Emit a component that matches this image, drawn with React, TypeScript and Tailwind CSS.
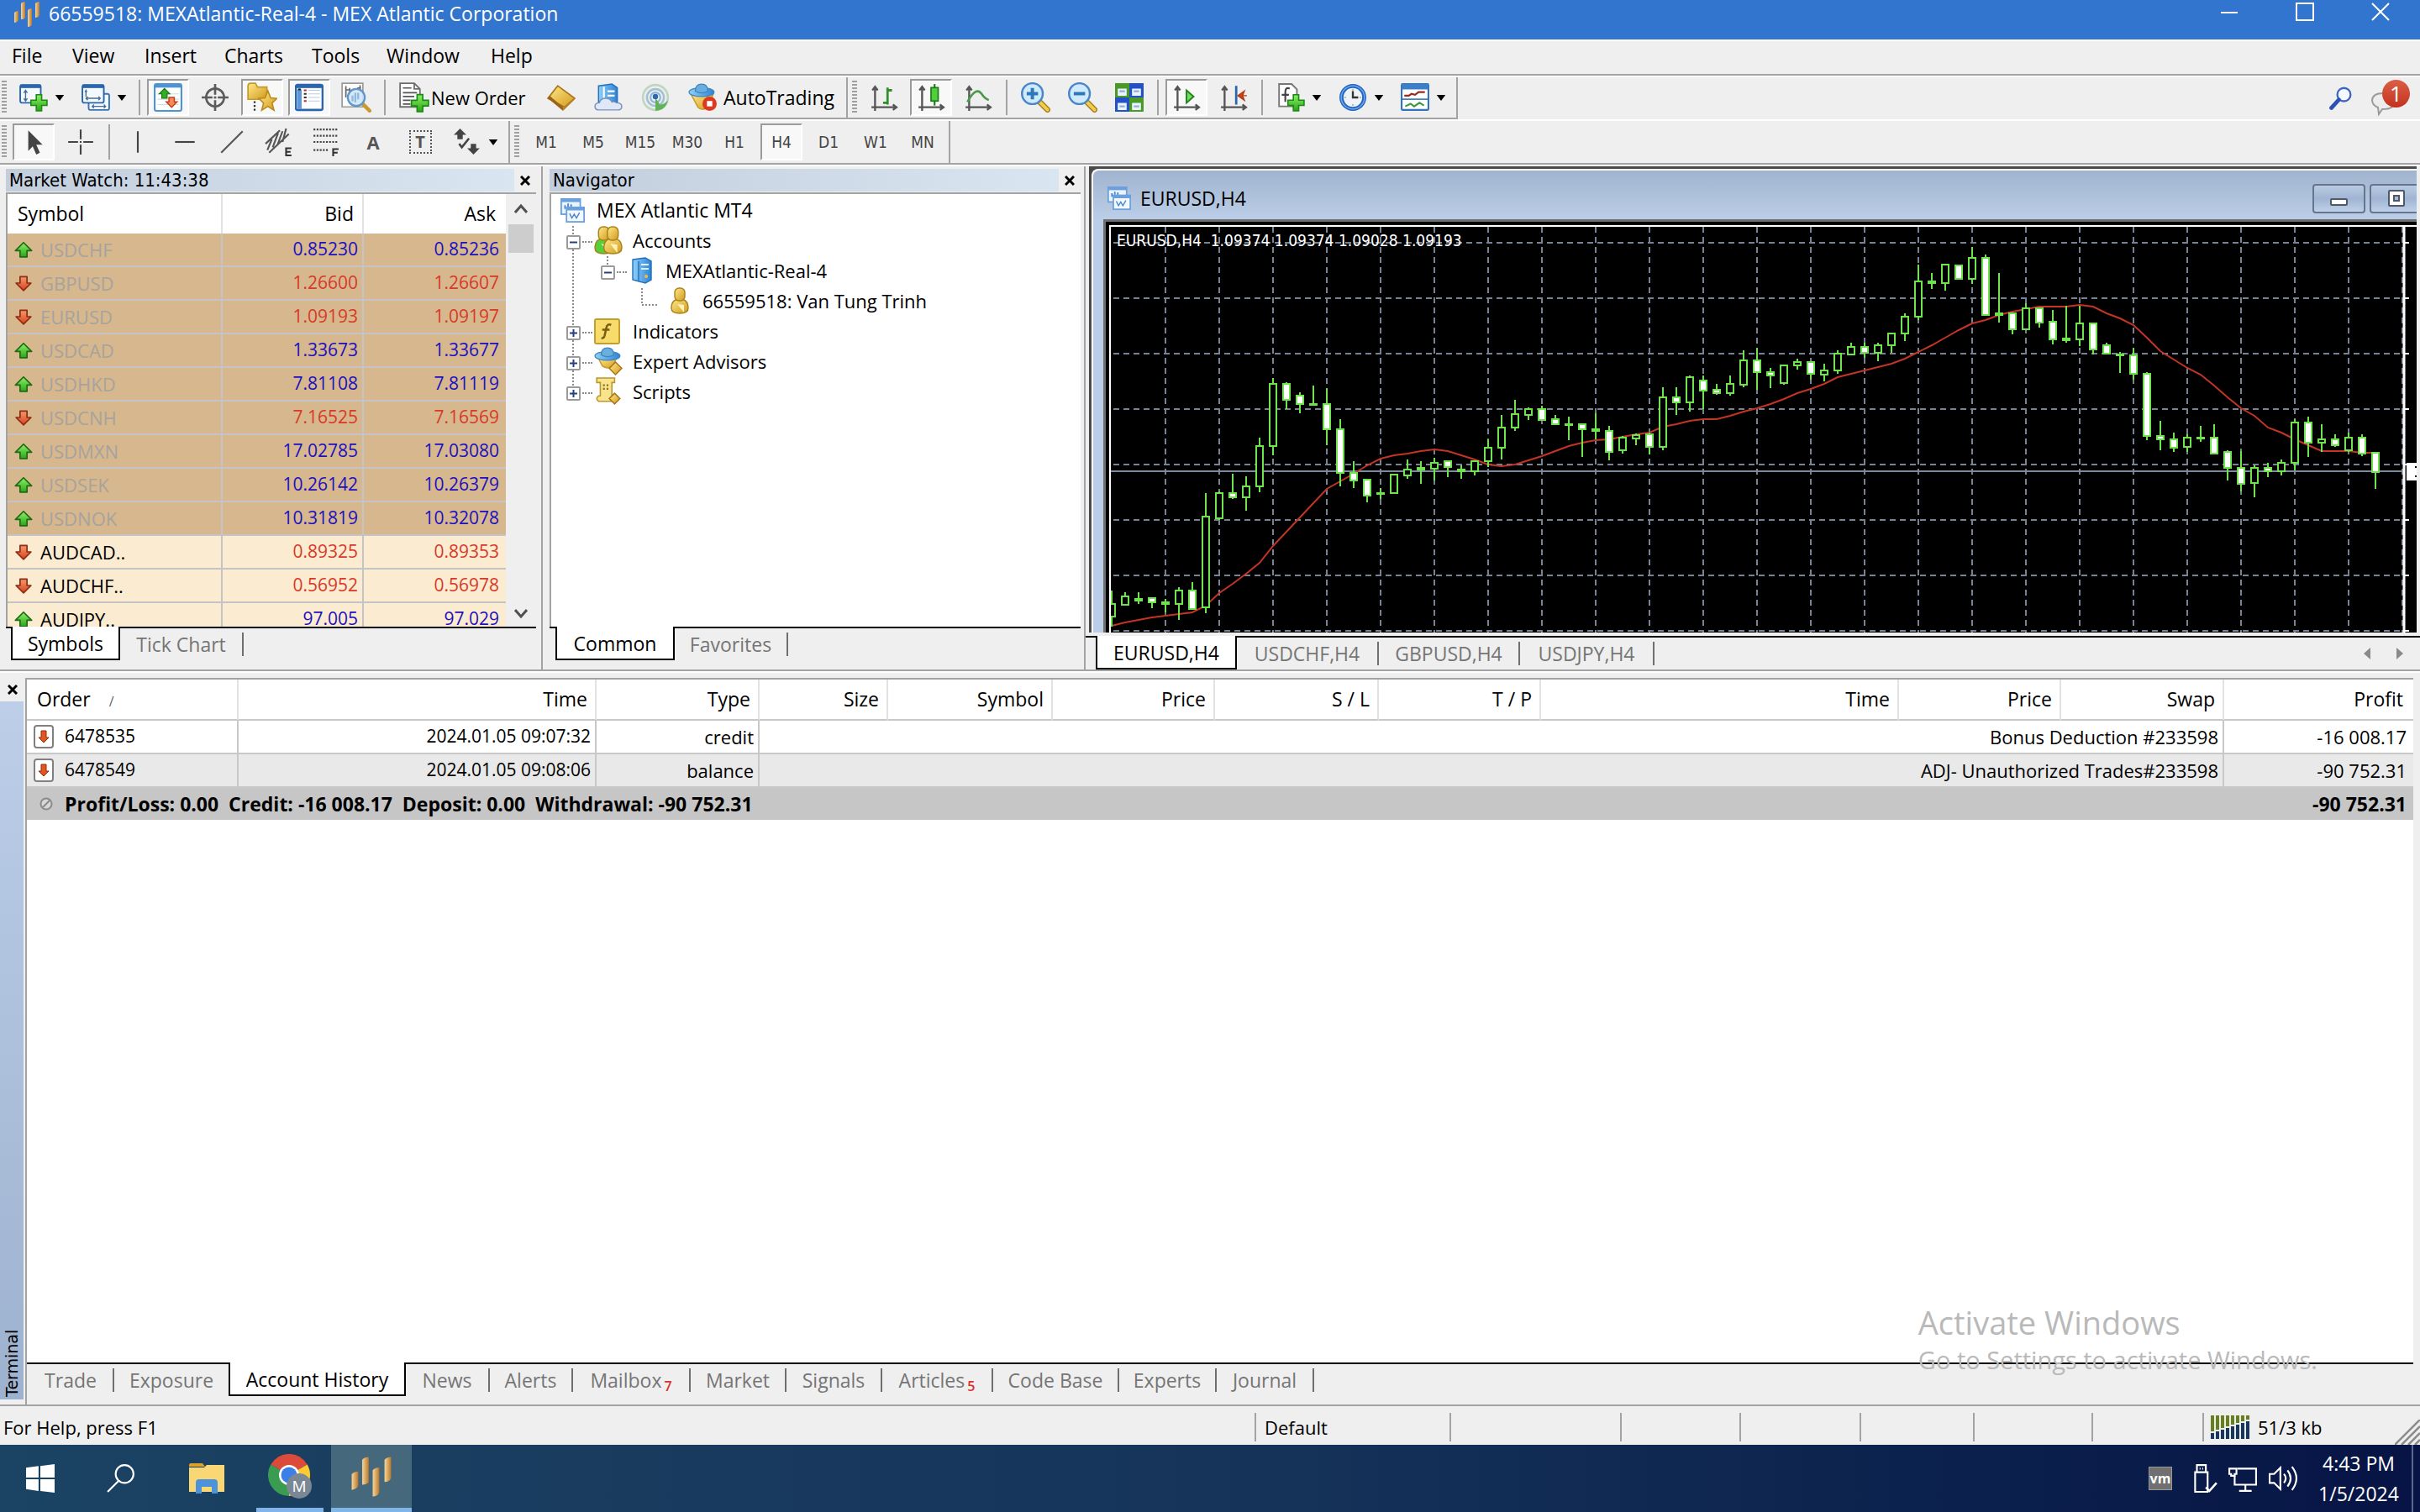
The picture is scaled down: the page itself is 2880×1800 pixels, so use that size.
import { ReactNode } from "react";

const quotes = [
  { symbol: "USDCHF", bid: "0.85230", ask: "0.85236", up: true, muted: true },
  { symbol: "GBPUSD", bid: "1.26600", ask: "1.26607", up: false, muted: true },
  { symbol: "EURUSD", bid: "1.09193", ask: "1.09197", up: false, muted: true },
  { symbol: "USDCAD", bid: "1.33673", ask: "1.33677", up: true, muted: true },
  { symbol: "USDHKD", bid: "7.81108", ask: "7.81119", up: true, muted: true },
  { symbol: "USDCNH", bid: "7.16525", ask: "7.16569", up: false, muted: true },
  { symbol: "USDMXN", bid: "17.02785", ask: "17.03080", up: true, muted: true },
  { symbol: "USDSEK", bid: "10.26142", ask: "10.26379", up: true, muted: true },
  { symbol: "USDNOK", bid: "10.31819", ask: "10.32078", up: true, muted: true },
  { symbol: "AUDCAD..", bid: "0.89325", ask: "0.89353", up: false, muted: false },
  { symbol: "AUDCHF..", bid: "0.56952", ask: "0.56978", up: false, muted: false },
  { symbol: "AUDJPY..", bid: "97.005", ask: "97.029", up: true, muted: false },
];

// [high, body top, body bottom, low, filled]
const candles = [
  [433, 449, 464, 476, 0], [435, 440, 450, 451, 0], [435, 443, 445, 449, 1], [441, 442, 447, 454, 1],
  [443, 447, 449, 459, 1], [429, 433, 449, 468, 0], [423, 433, 455, 456, 1], [317, 345, 453, 460, 0],
  [315, 317, 347, 349, 0], [294, 317, 322, 324, 1], [297, 309, 322, 338, 0], [251, 261, 309, 316, 0],
  [180, 187, 261, 272, 0], [185, 187, 206, 217, 1], [197, 201, 211, 222, 1], [189, 211, 212, 213, 1],
  [192, 211, 241, 260, 1], [229, 241, 293, 309, 1], [279, 293, 302, 311, 1], [300, 301, 320, 328, 1],
  [311, 317, 318, 324, 1], [294, 295, 317, 318, 0], [277, 289, 296, 300, 0], [279, 287, 289, 306, 1],
  [275, 281, 288, 302, 0], [278, 279, 286, 298, 1], [284, 289, 291, 300, 1], [278, 279, 291, 296, 0],
  [253, 263, 279, 286, 0], [224, 239, 263, 277, 0], [206, 223, 239, 243, 0], [215, 217, 224, 230, 0],
  [213, 217, 230, 231, 1], [224, 229, 235, 236, 1], [226, 235, 236, 254, 1], [234, 235, 241, 274, 1],
  [222, 241, 243, 253, 1], [237, 243, 268, 278, 1], [249, 251, 266, 270, 0], [246, 248, 252, 260, 0],
  [245, 247, 262, 271, 1], [191, 203, 262, 266, 0], [191, 203, 209, 224, 1], [177, 179, 209, 220, 0],
  [177, 183, 195, 217, 1], [187, 194, 198, 200, 1], [177, 187, 198, 201, 0], [147, 159, 188, 191, 0],
  [144, 159, 173, 194, 1], [168, 173, 177, 192, 1], [164, 165, 186, 188, 0], [157, 161, 165, 170, 0],
  [160, 161, 175, 182, 1], [163, 171, 176, 184, 0], [147, 151, 171, 175, 0], [138, 143, 152, 152, 0],
  [138, 143, 150, 156, 1], [138, 141, 150, 160, 0], [126, 127, 141, 150, 0], [103, 107, 127, 136, 0],
  [45, 65, 107, 111, 0], [55, 65, 67, 74, 1], [45, 45, 67, 76, 0], [45, 46, 62, 62, 1],
  [24, 37, 62, 68, 0], [33, 37, 105, 106, 1], [55, 103, 105, 114, 1], [102, 103, 122, 128, 1],
  [91, 97, 122, 123, 0], [96, 97, 114, 120, 1], [99, 113, 134, 140, 1], [94, 133, 135, 138, 1],
  [94, 115, 134, 142, 0], [114, 115, 146, 152, 1], [138, 141, 151, 152, 1], [149, 152, 153, 174, 1],
  [144, 153, 175, 182, 1], [173, 175, 249, 254, 1], [231, 249, 253, 266, 1], [245, 253, 263, 268, 1],
  [247, 251, 262, 268, 0], [237, 251, 252, 256, 1], [235, 251, 270, 271, 1], [266, 268, 287, 302, 1],
  [267, 287, 306, 315, 1], [284, 287, 305, 322, 0], [281, 287, 291, 298, 1], [277, 281, 291, 296, 0],
  [229, 233, 281, 290, 0], [226, 233, 257, 274, 1], [235, 253, 257, 268, 0], [247, 253, 260, 262, 1],
  [245, 251, 266, 268, 0], [247, 251, 270, 273, 1], [268, 269, 292, 312, 1],
];

const average = [
  475, 471, 468, 465, 463, 461, 459, 451, 436, 425, 413, 400, 380, 363, 346, 329, 312, 303, 294, 284, 276, 272,
  270, 267, 265, 267, 272, 277, 283, 285, 283, 278, 273, 267, 261, 257, 254, 253, 250, 247, 245, 238, 235, 231,
  229, 229, 225, 220, 216, 211, 205, 198, 193, 187, 179, 175, 171, 167, 163, 157, 149, 141, 132, 123, 115, 111,
  105, 101, 98, 95, 95, 95, 93, 95, 103, 109, 117, 132, 148, 158, 168, 176, 189, 203, 216, 225, 239, 245, 253,
  260, 267, 267, 267, 269, 269,
];

const columns = [
  { label: "Time", width: "w-[426px]" },
  { label: "Type", width: "w-[194px]" },
  { label: "Size", width: "w-[153px]" },
  { label: "Symbol", width: "w-[196px]" },
  { label: "Price", width: "w-[193px]" },
  { label: "S / L", width: "w-[195px]" },
  { label: "T / P", width: "w-[193px]" },
  { label: "Time", width: "w-[426px]" },
  { label: "Price", width: "w-[193px]" },
  { label: "Swap", width: "w-[194px]" },
];

const orders = [
  { id: "6478535", time: "2024.01.05 09:07:32", type: "credit", comment: "Bonus Deduction #233598", profit: "-16 008.17" },
  { id: "6478549", time: "2024.01.05 09:08:06", type: "balance", comment: "ADJ- Unauthorized Trades#233598", profit: "-90 752.31" },
];

interface IconProps {
  children: ReactNode;
  className?: string;
}

function Icon({ children, className = "size-[34px]" }: IconProps) {
  return (
    <svg viewBox="0 0 32 32" fill="none" className={`shrink-0 ${className}`} aria-hidden="true">
      {children}
    </svg>
  );
}

function Gradients() {
  return (
    <svg className="absolute size-0" aria-hidden="true">
      <defs>
        <linearGradient id="gold" x1="0" y1="0" x2="1" y2="1">
          <stop offset="0" stopColor="#ffe98a" />
          <stop offset="1" stopColor="#d29a1c" />
        </linearGradient>
        <linearGradient id="green" x1="0" y1="0" x2="0" y2="1">
          <stop offset="0" stopColor="#8cf06a" />
          <stop offset="1" stopColor="#2aa515" />
        </linearGradient>
        <linearGradient id="red" x1="0" y1="0" x2="0" y2="1">
          <stop offset="0" stopColor="#f59a6c" />
          <stop offset="1" stopColor="#d8401b" />
        </linearGradient>
        <linearGradient id="blue" x1="0" y1="0" x2="1" y2="0">
          <stop offset="0" stopColor="#8fd0f8" />
          <stop offset="1" stopColor="#2f83d6" />
        </linearGradient>
        <linearGradient id="bronze" x1="0" y1="0" x2="1" y2="0">
          <stop offset="0" stopColor="#f7d79a" />
          <stop offset="1" stopColor="#b9772c" />
        </linearGradient>
      </defs>
    </svg>
  );
}

function Plus() {
  return (
    <path
      transform="translate(12 12)"
      d="M7 1h6v6h6v6h-6v6H7v-6H1V7h6z"
      fill="url(#green)"
      stroke="#1c8a12"
      strokeWidth="1.5"
    />
  );
}

function Logo({ className }: { className: string }) {
  return (
    <Icon className={className}>
      <path d="M1 14q2-2 5-2v10q0 3-5 4z" fill="url(#bronze)" />
      <path d="M9 3q2-2 5-2v19q-1 2-5 2z" fill="url(#bronze)" />
      <path d="M17 11q2-2 5-2v19q-1 3-5 3z" fill="url(#bronze)" />
      <path d="M26 3q2-2 5-2v16q-1 3-5 3z" fill="url(#bronze)" />
    </Icon>
  );
}

function ArrowMark({ up }: { up: boolean }) {
  return (
    <Icon className="size-[22px]">
      {up ? (
        <path d="M16 4 30 18H22V29H10V18H2z" fill="url(#green)" stroke="#1d6b14" strokeWidth="2.5" strokeLinejoin="round" />
      ) : (
        <path d="M16 29 29 16H22V5H10V16H3z" fill="url(#red)" stroke="#8f2d12" strokeWidth="2.5" strokeLinejoin="round" />
      )}
    </Icon>
  );
}

function NewChartIcon() {
  return (
    <Icon>
      <rect x="1" y="2" width="23" height="20" rx="2" fill="#f4f9ff" stroke="#2a66ad" strokeWidth="1.8" />
      <path d="M1 3.5h23" stroke="#2a66ad" strokeWidth="4" />
      <path d="M7 9v10M5 11l2-3 2 3M5 17l2 3 2-3" stroke="#4a6c92" strokeWidth="1.3" />
      <Plus />
    </Icon>
  );
}

function ProfilesIcon() {
  return (
    <Icon>
      <rect x="8" y="12" width="23" height="18" rx="2" fill="#f4f9ff" stroke="#3a74b8" strokeWidth="1.8" />
      <rect x="1" y="2" width="24" height="20" rx="2" fill="#f4f9ff" stroke="#2a66ad" strokeWidth="1.8" />
      <path d="M1 3.5h24" stroke="#2a66ad" strokeWidth="4" />
      <path d="M5 8v7M4 10l1-2 1 2M5 17h16M7 15l-2 2 2 2M19 15l2 2-2 2M12 26h15M14 24l-2 2 2 2M25 24l2 2-2 2" stroke="#4a6c92" strokeWidth="1.3" />
    </Icon>
  );
}

function MarketWatchIcon() {
  return (
    <Icon>
      <rect x="1" y="1" width="30" height="30" rx="2" fill="#fdfefe" stroke="#4f93d2" strokeWidth="2" />
      <path d="M1 3h30" stroke="#4f93d2" strokeWidth="4" />
      <path d="M4 12h24M4 18h24M4 24h24" stroke="#cfdbe8" />
      <path d="m12 6 6 6h-3v5H9v-5H6z" fill="#35ad20" stroke="#19750f" />
      <path d="m20 27 6-6h-3v-5h-6v5h-3z" fill="#f58a5c" stroke="#c2401a" strokeWidth="1.4" />
    </Icon>
  );
}

function TargetIcon() {
  return (
    <Icon>
      <circle cx="16" cy="16" r="10" stroke="#5b5b5b" strokeWidth="2.5" />
      <path d="M16 1v12M16 19v12M1 16h12M19 16h12" stroke="#5b5b5b" strokeWidth="2.5" />
      <circle cx="16" cy="16" r="1.5" fill="#5b5b5b" />
    </Icon>
  );
}

function NavigatorIcon() {
  return (
    <Icon className="size-[36px]">
      <path d="M1 4q0-3 3-3h5l2 4h10v13H1z" fill="url(#gold)" stroke="#c49a2c" strokeWidth="1.5" />
      <path d="M8 20v11" stroke="#333" strokeWidth="2" strokeDasharray="2 2" />
      <path d="m22 9 3 7.500 6.500.5-5 5 2 7.500-6.500-4-6.500 4 2-7.500-5-5 6.500-.5z" fill="url(#gold)" stroke="#b98a1a" strokeWidth="1.4" />
    </Icon>
  );
}

function TerminalIcon() {
  return (
    <Icon>
      <rect x="1" y="2" width="30" height="28" rx="2" fill="#fff" stroke="#2a66ad" strokeWidth="2.4" />
      <path d="M1 4h30" stroke="#2a66ad" strokeWidth="3" />
      <path d="M5 7v22" stroke="#5c98d8" strokeWidth="5" />
      <path d="M5 6v2" stroke="#123" strokeWidth="3" />
      <path d="M10 8h3M10 20h3" stroke="#c22" strokeWidth="2" />
      <path d="M10 12h3M10 16h3" stroke="#333" strokeWidth="2" />
      <path d="M15 8h13M15 12h13M15 16h13M15 20h13" stroke="#b9cbe6" />
    </Icon>
  );
}

function TesterIcon() {
  return (
    <Icon className="size-[36px]">
      <path d="M1 1h22v25H1z" fill="#fcfcfc" stroke="#9a9a9a" strokeWidth="1.5" />
      <path d="M5 4v12M9 6v8M20 3v6M5 8h4M17 6h4" stroke="#666" strokeWidth="1.5" />
      <path d="m23 23 7 7" stroke="#c99a2b" strokeWidth="4" strokeLinecap="round" />
      <circle cx="16" cy="16" r="9" fill="#cfe6fa" fillOpacity=".9" stroke="#5f95c8" strokeWidth="2" />
      <path d="M12 20v-6M15 21V11M18 18v-7" stroke="#8fb8dd" strokeWidth="2" />
    </Icon>
  );
}

function NewOrderIcon() {
  return (
    <Icon className="size-[36px]">
      <path d="M1 1h15l6 6v19H1z" fill="#fdfdfd" stroke="#6d6d6d" strokeWidth="1.6" />
      <path d="M16 1v6h6" stroke="#6d6d6d" strokeWidth="1.6" />
      <path d="M4 6h9M4 11h15M4 15h12M4 19h8M4 23h8" stroke="#555" strokeWidth="1.5" />
      <Plus />
    </Icon>
  );
}

function MetaEditorIcon() {
  return (
    <Icon>
      <path d="M12 3 31 17 20 27 1 17z" fill="url(#gold)" stroke="#a8741b" strokeWidth="1.5" />
      <path d="m1 17 17 14v-4L3 14z" fill="#9a6414" />
      <path d="m18 31 13-13v-2L18 27z" fill="#b5802a" />
    </Icon>
  );
}

function CloudIcon() {
  return (
    <Icon>
      <path d="M5 3 20 1l6 4v16H5z" fill="url(#blue)" stroke="#2571bd" strokeWidth="1.4" />
      <path d="M11 4v14M15 9h8M15 14h8" stroke="#fff" strokeWidth="2" />
      <path d="M6 30q-5 0-5-4 0-4 5-4 1-5 7-5 5 0 7 4 3-1 5 1 6 0 6 4t-5 4z" fill="#dfe8f7" stroke="#7b93bd" strokeWidth="1.4" />
    </Icon>
  );
}

function SignalIcon() {
  return (
    <Icon>
      <circle cx="16" cy="16" r="14" stroke="#bcd6c0" strokeWidth="2.4" />
      <circle cx="16" cy="16" r="9.5" stroke="#a3c0d6" strokeWidth="2.4" />
      <circle cx="16" cy="16" r="5.5" stroke="#8db6d4" strokeWidth="2" />
      <path d="M16 16v15q12-1 14-12-4 5-9 5z" fill="#62b25a" />
      <circle cx="16" cy="15" r="3" fill="#2b68b4" />
    </Icon>
  );
}

function ExpertHat() {
  return (
    <>
      <ellipse cx="15" cy="10" rx="14" ry="5" fill="url(#blue)" stroke="#3f86bd" strokeWidth="1.2" />
      <path d="M8 9q0-8 7-8t7 8q-7 4-14 0z" fill="#69aede" stroke="#3f86bd" strokeWidth="1.2" />
    </>
  );
}

function AutoTradingIcon() {
  return (
    <Icon>
      <path d="M3 12h25l-5 15q-7 5-12 0z" fill="url(#gold)" stroke="#c7992a" strokeWidth="1.4" />
      <ExpertHat />
      <circle cx="24" cy="23" r="8" fill="#dc3a20" />
      <rect x="21" y="20" width="6" height="6" fill="#fff" />
    </Icon>
  );
}

function Axes() {
  return <path d="M6 31V4M3 8l3-4 3 4M2 27h28M26 24l4 3-4 3" stroke="#555" strokeWidth="2.2" />;
}

function MagnifierIcon({ plus }: { plus: boolean }) {
  return (
    <Icon className="size-[36px]">
      <path d="m20 20 9 9" stroke="#a87d17" strokeWidth="6" strokeLinecap="round" />
      <path d="m20 20 9 9" stroke="#f0cd50" strokeWidth="3.5" strokeLinecap="round" />
      <circle cx="13" cy="12" r="11" fill="#cfeaff" stroke="#4a86c9" strokeWidth="2.2" />
      <path d={plus ? "M13 6v12M7 12h12" : "M7 12h12"} stroke="#2f78b8" strokeWidth="3.5" />
    </Icon>
  );
}

function TileIcon() {
  return (
    <Icon>
      <path d="M0 0h16v16H0zM16 16h16v16H16z" fill="#4b9a25" />
      <path d="M16 0h16v16H16zM0 16h16v16H0z" fill="#2451c6" />
      <path d="M3 6h10v8H3zM19 6h10v8H19zM3 22h10v8H3zM19 22h10v8H19z" fill="#eaf3ff" />
      <path d="M5 9h6M21 9h6M5 26h6M21 26h6" stroke="#8fb0d8" strokeWidth="2" />
    </Icon>
  );
}

function ClockIcon() {
  return (
    <Icon>
      <circle cx="16" cy="16" r="15" fill="#1f62c4" />
      <circle cx="16" cy="16" r="13" stroke="#6aa6e8" strokeWidth="1.5" />
      <circle cx="16" cy="16" r="10.5" fill="#eef3f8" />
      <path d="M16 9v7h6" stroke="#333" strokeWidth="2.2" />
      <path d="M16 7v1M16 24v1M7 16h1M24 16h1" stroke="#888" strokeWidth="2" />
    </Icon>
  );
}

function TemplateIcon() {
  return (
    <Icon>
      <rect x="1" y="1" width="30" height="29" rx="1" fill="#fff" stroke="#3273bb" strokeWidth="2" />
      <path d="M1 4h30" stroke="#3b7fca" strokeWidth="6" />
      <path d="M1 18h30" stroke="#3273bb" strokeWidth="1.5" />
      <path d="M4 14h5l3-2 4 1 4-3h7" stroke="#9a2a1a" strokeWidth="2" />
      <path d="m5 26 6-3 4 3 6-4 5 3" stroke="#3f9a3a" strokeWidth="2" />
    </Icon>
  );
}

function ChartWindowIcon({ className }: { className: string }) {
  return (
    <Icon className={className}>
      <rect x="1" y="1" width="25" height="20" fill="#eaf4ff" stroke="#6ba0dc" strokeWidth="2" />
      <path d="M1 3h25" stroke="#6ba0dc" strokeWidth="4" />
      <path d="M6 14V9M10 11V7M14 12V8" stroke="#4b86cc" strokeWidth="2" />
      <rect x="8" y="12" width="23" height="19" fill="#f4f9ff" stroke="#6ba0dc" strokeWidth="2" />
      <path d="M8 14h23" stroke="#6ba0dc" strokeWidth="4" />
      <path d="m12 20 3 6 3-5 3 5 4-7" stroke="#4b86cc" strokeWidth="1.6" />
    </Icon>
  );
}

function Person({ x = 0, color = "url(#gold)" }: { x?: number; color?: string }) {
  return (
    <g transform={`translate(${x} 0)`} stroke="#a8821c" strokeWidth="1.4">
      <path d="M1 25q0-11 10-11t10 11q0 6-10 6T1 25z" fill={color} />
      <rect x="5" y="1" width="12" height="15" rx="5" fill="url(#gold)" />
      <path d="m8 20 8 10v-9z" fill="#fff3b8" stroke="none" />
    </g>
  );
}

function Separator() {
  return <div className="mx-0.5 h-[42px] w-[2px] shrink-0 bg-[#a3a3a3]" />;
}

function Grip() {
  return (
    <div className="mr-px h-[40px] w-[6px] shrink-0 bg-[repeating-linear-gradient(180deg,#a0a0a0_0_2px,#efefef_2px_4px)]" />
  );
}

interface ToolProps {
  label: string;
  active?: boolean;
  children: ReactNode;
}

function Tool({ label, active, children }: ToolProps) {
  return (
    <button
      aria-label={label}
      className={`flex h-[44px] w-[50px] shrink-0 items-center justify-center border-2 ${
        active ? "border-t-[#9b9b9b] border-l-[#9b9b9b] border-r-white border-b-white bg-[#f8f8f8]" : "border-transparent"
      }`}
    >
      {children}
    </button>
  );
}

function DropTool({ label, children }: { label: string; children: ReactNode }) {
  return (
    <button aria-label={label} className="flex h-[44px] w-[68px] shrink-0 items-center gap-[8px] pl-2">
      {children}
      <svg viewBox="0 0 12 8" className="h-[7px] w-[12px]">
        <path d="M0 0h12L6 8z" fill="#000" />
      </svg>
    </button>
  );
}

function MainToolbar() {
  return (
    <div className="flex h-[52px] items-stretch border-t-2 border-white text-[23px]">
      <div className="flex items-center gap-[6px] border-r-2 border-b-2 border-[#a3a3a3] pr-[6px] pl-[2px]">
        <Grip />
        <DropTool label="New Chart"><NewChartIcon /></DropTool>
        <DropTool label="Profiles"><ProfilesIcon /></DropTool>
        <Separator />
        <Tool label="Market Watch" active><MarketWatchIcon /></Tool>
        <Tool label="Data Window"><TargetIcon /></Tool>
        <Tool label="Navigator" active><NavigatorIcon /></Tool>
        <Tool label="Terminal" active><TerminalIcon /></Tool>
        <Tool label="Strategy Tester"><TesterIcon /></Tool>
        <Separator />
        <button className="flex h-[44px] w-[170px] items-center gap-[2px] pl-2 text-[22px] whitespace-nowrap">
          <NewOrderIcon />
          New Order
        </button>
        <Tool label="MetaEditor"><MetaEditorIcon /></Tool>
        <Tool label="Hosting"><CloudIcon /></Tool>
        <Tool label="Signals"><SignalIcon /></Tool>
        <button className="flex h-[44px] w-[190px] items-center gap-2 pl-2 whitespace-nowrap">
          <AutoTradingIcon />
          AutoTrading
        </button>
      </div>
      <div className="flex items-center gap-[6px] border-r-2 border-b-2 border-[#a3a3a3] pr-[6px] pl-[5px]">
        <Grip />
        <Tool label="Bar Chart">
          <Icon><Axes /><path d="M20 5v19M20 8h5M15 22h5" stroke="#2f8f2a" strokeWidth="2.6" /></Icon>
        </Tool>
        <Tool label="Candlesticks" active>
          <Icon>
            <Axes />
            <path d="M20 1v24" stroke="#1d7a18" strokeWidth="2" />
            <rect x="16" y="5" width="8" height="15" fill="#4fd03b" stroke="#1d7a18" strokeWidth="1.6" />
          </Icon>
        </Tool>
        <Tool label="Line Chart">
          <Icon><Axes /><path d="M4 21q10-18 16-9 3 5 8 7" stroke="#4c9a48" strokeWidth="2.4" /></Icon>
        </Tool>
        <Separator />
        <Tool label="Zoom In"><MagnifierIcon plus /></Tool>
        <Tool label="Zoom Out"><MagnifierIcon plus={false} /></Tool>
        <Tool label="Tile Windows"><TileIcon /></Tool>
        <Separator />
        <Tool label="Auto Scroll" active>
          <Icon><Axes /><path d="m16 8 8 7-8 7z" fill="#6fdc62" stroke="#23831d" strokeWidth="1.8" /></Icon>
        </Tool>
        <Tool label="Chart Shift">
          <Icon>
            <Axes />
            <path d="M19 3v21" stroke="#2a66a8" strokeWidth="2.6" />
            <path d="m21 14 7-5-2 5h5-5l2 5z" fill="#d2461c" stroke="#b53a14" strokeWidth="1.4" />
          </Icon>
        </Tool>
        <Separator />
        <DropTool label="Indicators">
          <Icon>
            <path d="M3 1h14l6 6v19H3z" fill="#fdfdfd" stroke="#777" strokeWidth="1.8" />
            <path d="M15 6q-5-2-5 4v11M6 13h8" stroke="#444" strokeWidth="2" />
            <Plus />
          </Icon>
        </DropTool>
        <DropTool label="Periods"><ClockIcon /></DropTool>
        <DropTool label="Templates"><TemplateIcon /></DropTool>
      </div>
      <div className="flex flex-1 items-center justify-end gap-[22px] pr-[12px]">
        <button aria-label="Search">
          <Icon className="size-[28px]">
            <circle cx="20" cy="11" r="9" fill="#f4f8ff" stroke="#3d63c4" strokeWidth="2.6" />
            <path d="M13 18 3 29" stroke="#2c50b4" strokeWidth="5.5" strokeLinecap="round" />
          </Icon>
        </button>
        <button aria-label="Messages" className="relative h-[44px] w-[46px]">
          <svg viewBox="0 0 46 44" className="size-full" fill="none">
            <path d="M9 41 8 33Q1 30 1 24 2 16 14 16q14 0 14 10 0 9-15 9z" fill="#ececec" stroke="#9a9a9a" strokeWidth="2" />
          </svg>
          <span className="absolute top-0 right-0 flex size-[33px] items-center justify-center rounded-full bg-gradient-to-b from-[#db5f45] to-[#c4301d] text-[26px] text-white">
            1
          </span>
        </button>
      </div>
    </div>
  );
}

function LineToolbar() {
  const periods = ["M1", "M5", "M15", "M30", "H1", "H4", "D1", "W1", "MN"];

  return (
    <div className="flex h-[54px] border-t-2 border-b-2 border-t-white border-b-[#a3a3a3]">
      <div className="flex items-center gap-[6px] border-r-2 border-[#a3a3a3] pr-[6px] pl-[2px]">
        <Grip />
        <Tool label="Cursor" active>
          <Icon><path d="M10 3v23l5-5 4 9 4-2-4-9h7z" fill="#444" /></Icon>
        </Tool>
        <Tool label="Crosshair">
          <Icon><path d="M16 2v11M16 15v2M16 19v11M2 16h11M19 16h11" stroke="#444" strokeWidth="2" /></Icon>
        </Tool>
        <Separator />
        <Tool label="Vertical Line">
          <Icon><path d="M16 4v24" stroke="#444" strokeWidth="2" /></Icon>
        </Tool>
        <Tool label="Horizontal Line">
          <Icon><path d="M5 16h22" stroke="#444" strokeWidth="2" /></Icon>
        </Tool>
        <Tool label="Trendline">
          <Icon><path d="M4 28 28 4" stroke="#555" strokeWidth="2" /></Icon>
        </Tool>
        <Tool label="Equidistant Channel">
          <Icon>
            <path d="M1 18 17 3M5 28 27 7M3 25l5-12M9 22l6-16M14 20l6-16M20 16l4-15" stroke="#555" strokeWidth="2" />
            <path d="M30 23h-6v8h6M24 27h5" stroke="#333" strokeWidth="2" />
          </Icon>
        </Tool>
        <Tool label="Fibonacci">
          <Icon>
            <path d="M2 2h27M2 9h27M2 16h27M2 25h17" stroke="#444" strokeWidth="2" strokeDasharray="2 1.5" />
            <path d="M30 24h-6v9M24 28h5" stroke="#333" strokeWidth="2" />
          </Icon>
        </Tool>
        <Tool label="Text"><span className="text-[22px] font-bold text-[#555]">A</span></Tool>
        <Tool label="Text Label">
          <span className="flex h-[28px] w-[27px] items-center justify-center border-2 border-dotted border-[#555] text-[20px] font-bold text-[#555]">T</span>
        </Tool>
        <DropTool label="Arrows">
          <Icon>
            <path d="m8 1 7 7h-4v5H5V8H1zM23 30l-7-7h4v-5h6v5h4z" fill="#444" />
            <path d="m7 18 3 4 8-10" stroke="#444" strokeWidth="2.4" />
          </Icon>
        </DropTool>
      </div>
      <div className="flex items-center gap-[6px] border-r-2 border-[#a3a3a3] pr-[6px] pl-[5px]">
        <Grip />
        {periods.map((period) => (
          <Tool key={period} label={period} active={period === "H4"}>
            <span className="font-['DejaVu_Sans_Condensed','DejaVu_Sans',sans-serif] text-[19px] text-[#444]">{period}</span>
          </Tool>
        ))}
      </div>
    </div>
  );
}

function CloseMark() {
  return (
    <svg viewBox="0 0 12 12" className="size-[12px]">
      <path d="m1 1 10 10M11 1 1 11" stroke="#000" strokeWidth="3" />
    </svg>
  );
}

function PanelTitle({ title }: { title: string }) {
  return (
    <div className="mb-px flex h-[27px] shrink-0 items-center font-['DejaVu_Sans_Condensed','DejaVu_Sans',sans-serif]">
      <h2 className="flex h-full flex-1 items-center bg-gradient-to-r from-[#c3cedc] to-[#dae5f2] pl-1 text-[22px] leading-[24px]">
        {title}
      </h2>
      <button aria-label={`Close ${title}`} className="flex w-[26px] justify-center">
        <CloseMark />
      </button>
    </div>
  );
}

interface TabProps {
  label: string;
  width: string;
  active?: boolean;
  badge?: string;
  divider?: boolean;
}

function Tab({ label, width, active, badge, divider = true }: TabProps) {
  if (active) {
    return (
      <button className={`-mt-[2px] h-[40px] shrink-0 border-2 border-t-0 border-black bg-white pt-[2px] text-[23px] ${width}`}>
        {label}
      </button>
    );
  }
  return (
    <button className={`flex h-[38px] shrink-0 items-center justify-center text-[23px] text-[#757575] ${width}`}>
      <span className="flex-1 text-center whitespace-nowrap">
        {label}
        {badge && <sub className="ml-[3px] text-[16px] font-semibold text-[#d8302a]">{badge}</sub>}
      </span>
      {divider && <span className="h-[28px] w-[2px] bg-[#6f6f6f]" />}
    </button>
  );
}

function MarketWatch() {
  return (
    <section className="flex w-[646px] shrink-0 flex-col border-r-2 border-[#a3a3a3] pt-[3px] pr-[6px] pb-[11px] pl-[7px]">
      <PanelTitle title="Market Watch: 11:43:38" />
      <div className="flex min-h-0 flex-1 overflow-hidden border-t-2 border-l-2 border-[#a3a3a3]">
        <table className="w-[593px] table-fixed border-separate border-spacing-0 self-start text-[21px]">
          <thead>
            <tr className="h-[47px] bg-white text-right text-[23px]">
              <th className="w-[256px] border-r-2 border-[#e2e2e2] pl-3 text-left font-normal">Symbol</th>
              <th className="w-[168px] border-r-2 border-[#e2e2e2] pr-[10px] font-normal">Bid</th>
              <th className="pr-3 font-normal">Ask</th>
            </tr>
          </thead>
          <tbody>
            {quotes.map((quote) => (
              <tr
                key={quote.symbol}
                className={`text-right ${quote.muted ? "bg-[#d7b78d]" : "bg-[#fbebd0]"} ${
                  quote.up ? "text-[#1d10c0]" : "text-[#d83a28]"
                }`}
              >
                <td
                  className={`h-[40px] border-r-2 border-b-2 border-[#c4c4c6] p-0 text-[22px] ${
                    quote.muted ? "text-[#a6a39e]" : "text-black"
                  }`}
                >
                  <div className="flex items-center gap-[9px] pl-2">
                    <ArrowMark up={quote.up} />
                    {quote.symbol}
                  </div>
                </td>
                <td className="border-r-2 border-b-2 border-[#c4c4c6] p-0 pr-[5px]">{quote.bid}</td>
                <td className="border-b-2 border-[#c4c4c6] p-0 pr-2">{quote.ask}</td>
              </tr>
            ))}
          </tbody>
        </table>
        <div className="flex flex-1 flex-col items-center">
          <svg viewBox="0 0 16 16" fill="none" className="my-[10px] size-[16px] shrink-0">
            <path d="m1 12 7-8 7 8" stroke="#505050" strokeWidth="3" />
          </svg>
          <div className="h-[34px] w-[30px] bg-[#cdcdcd]" />
          <svg viewBox="0 0 16 16" fill="none" className="mt-auto mb-[8px] size-[16px]">
            <path d="m1 4 7 8 7-8" stroke="#505050" strokeWidth="3" />
          </svg>
        </div>
      </div>
      <div className="flex h-[40px] shrink-0 border-t-2 border-black pl-[6px]">
        <Tab label="Symbols" width="w-[130px]" active />
        <Tab label="Tick Chart" width="w-[147px]" />
      </div>
    </section>
  );
}

interface NodeProps {
  label: string;
  indent: string;
  sign?: "+" | "-";
  gap: string;
  children: ReactNode;
}

function TreeNode({ label, indent, sign, gap, children }: NodeProps) {
  return (
    <li className={`flex h-[36px] items-center ${indent}`}>
      {sign && (
        <>
          <button aria-label={`Toggle ${label}`} className="mt-1 size-[17px] shrink-0 rounded-xs border-2 border-[#9a9a9a] bg-white">
            <svg viewBox="0 0 13 13" className="size-full">
              <path d={sign === "+" ? "M2 6.500h9M6.500 2v9" : "M2 6.500h9"} stroke="#26407e" strokeWidth="2" />
            </svg>
          </button>
          <span className="mx-[2px] mt-1 w-[12px] shrink-0 border-t-2 border-dotted border-[#8a8a8a]" />
        </>
      )}
      {children}
      <span className={gap}>{label}</span>
    </li>
  );
}

function Navigator() {
  return (
    <section className="flex w-[646px] shrink-0 flex-col border-r-2 border-[#a3a3a3] pt-[3px] pr-[4px] pb-[11px] pl-2">
      <PanelTitle title="Navigator" />
      <div className="relative min-h-0 flex-1 border-t-2 border-l-2 border-[#a3a3a3] bg-white pt-px">
        <svg className="absolute inset-0 size-full" fill="none" stroke="#8a8a8a" strokeWidth="2" strokeDasharray="2 2">
          <path d="M26 38v196M67 74v20M108 112v20h20" />
        </svg>
        <ul className="relative">
          <TreeNode label="MEX Atlantic MT4" indent="pl-[11px] text-[23px]" gap="pl-[14px]">
            <ChartWindowIcon className="size-[29px]" />
          </TreeNode>
          <TreeNode label="Accounts" indent="pl-[18px]" sign="-" gap="pl-[12px]">
            <Icon>
              <Person color="#55cf3a" />
              <Person x={10} />
            </Icon>
          </TreeNode>
          <TreeNode label="MEXAtlantic-Real-4" indent="pl-[59px]" sign="-" gap="pl-[12px]">
            <Icon className="size-[32px]">
              <path d="M5 3 20 1l7 4v22l-7 4-15-4z" fill="url(#blue)" stroke="#1f6fb8" strokeWidth="1.4" />
              <path d="M12 5v24" stroke="#1f6fb8" strokeWidth="1.4" />
              <path d="M15 9h9M15 14h9" stroke="#d8efff" strokeWidth="2" />
              <circle cx="21" cy="23" r="2" fill="#f0c030" />
            </Icon>
          </TreeNode>
          <TreeNode label="66559518: Van Tung Trinh" indent="pl-[137px]" gap="pl-[11px]">
            <Icon className="size-[32px]"><Person x={5} /></Icon>
          </TreeNode>
          <TreeNode label="Indicators" indent="pl-[18px]" sign="+" gap="pl-[15px]">
            <Icon className="size-[31px]">
              <rect x="1" y="1" width="30" height="30" rx="2" fill="#f7dc6c" stroke="#c39e2f" strokeWidth="2" />
              <path d="M21 8q-5-2-6 4l-2 9q-1 4-4 3M10 14h9" stroke="#7a5c12" strokeWidth="2.6" />
            </Icon>
          </TreeNode>
          <TreeNode label="Expert Advisors" indent="pl-[18px]" sign="+" gap="pl-[12px]">
            <Icon>
              <path d="M5 13h20l-4 8q-6 5-12 0z" fill="url(#gold)" stroke="#c7992a" strokeWidth="1.4" />
              <ExpertHat />
              <path d="m24 17 7 7-7 7-7-7z" fill="url(#gold)" stroke="#a8741b" strokeWidth="1.4" />
            </Icon>
          </TreeNode>
          <TreeNode label="Scripts" indent="pl-[18px]" sign="+" gap="pl-[12px]">
            <Icon>
              <path d="M3 1h20v5h-3v15h4v6H5q-4-3 0-6h2V6H3z" fill="#f7e48c" stroke="#b9972c" strokeWidth="1.5" />
              <path d="M10 9h2M14 9h2M10 13h2M14 13h2" stroke="#8a6d1c" strokeWidth="2" />
              <path d="m23 18 6 6-6 6-6-6z" fill="url(#gold)" stroke="#a8741b" strokeWidth="1.4" />
            </Icon>
          </TreeNode>
        </ul>
      </div>
      <div className="flex h-[40px] shrink-0 border-t-2 border-black pl-[7px]">
        <Tab label="Common" width="w-[142px]" active />
        <Tab label="Favorites" width="w-[135px]" />
      </div>
    </section>
  );
}

function PriceChart() {
  const rows = Array.from({ length: 8 }, (_, i) => 19 + i * 66);
  const lines = Array.from({ length: 24 }, (_, i) => 65 + i * 64);

  return (
    <svg className="absolute inset-0 size-full" fill="none">
      <g stroke="#778393" strokeWidth="2" strokeDasharray="7 5">
        {rows.map((y) => (
          <path key={y} d={`M3 ${y}H1537`} />
        ))}
        {lines.map((x) => (
          <path key={x} d={`M${x} 0V484`} />
        ))}
      </g>
      <path d="M0 291H1538" stroke="#7d8b9c" strokeWidth="2" />
      <polyline points={average.map((y, i) => `${1 + i * 16},${y}`).join(" ")} stroke="#c23425" strokeWidth="2" />
      <g stroke="#6fe34f" strokeWidth="2">
        {candles.map(([high, top, bottom, low, filled], i) => (
          <g key={i}>
            <path d={`M${1 + i * 16} ${high}V${low}`} />
            <rect x={-3 + i * 16} y={top} width="8" height={bottom - top} fill={filled ? "#fff" : "#000"} />
          </g>
        ))}
      </g>
      <path d="M1539 0V484" stroke="#fff" strokeWidth="3" />
      {rows.map((y) => (
        <path key={y} d={`M1540 ${y}h5`} stroke="#fff" strokeWidth="2" />
      ))}
      <rect x="1542" y="281" width="14" height="21" fill="#fff" />
      <path d="M1552 286h2M1552 297h2" stroke="#000" strokeWidth="2" />
    </svg>
  );
}

function ChartArea() {
  const charts = [
    { label: "USDCHF,H4", width: "w-[169px]" },
    { label: "GBPUSD,H4", width: "w-[168px]" },
    { label: "USDJPY,H4", width: "w-[160px]" },
  ];

  return (
    <section className="flex min-w-0 flex-1 flex-col">
      <div className="mr-1 ml-1 flex min-h-0 flex-1 flex-col overflow-hidden border-t-3 border-l-3 border-[#4a4a4a] bg-[#4a4a4a]">
        <div className="flex min-h-0 flex-1 flex-col rounded-tl-lg border-t-2 border-l-2 border-white bg-[#bccee7] pl-[12px]">
          <div className="-ml-[12px] flex h-[58px] shrink-0 items-center justify-between rounded-tl-lg bg-gradient-to-b from-[#a0b4cf] to-[#bccee7] pt-2 pl-[17px]">
            <div className="flex items-center gap-[11px]">
              <ChartWindowIcon className="size-[28px]" />
              <h2 className="text-[23px]">EURUSD,H4</h2>
            </div>
            <div className="-mr-[7px] flex gap-[5px]">
              <button
                aria-label="Minimize chart"
                className="flex h-[35px] w-[63px] items-center justify-center rounded-sm border-2 border-[#64758d] bg-gradient-to-b from-[#b9cbe3] via-[#a0b5d3] to-[#bfd0e8]"
              >
                <span className="mt-2 h-[9px] w-[21px] rounded-xs border-2 border-[#4f5a69] bg-white" />
              </button>
              <button
                aria-label="Maximize chart"
                className="flex h-[35px] w-[63px] items-center justify-center rounded-sm border-2 border-[#64758d] bg-gradient-to-b from-[#b9cbe3] via-[#a0b5d3] to-[#bfd0e8]"
              >
                <span className="flex size-[20px] items-center justify-center rounded-xs border-2 border-[#4f5a69] bg-white">
                  <span className="size-[8px] border-2 border-[#4f5a69] bg-[#a9bdd9]" />
                </span>
              </button>
            </div>
          </div>
          <div className="flex min-h-0 flex-1 border-t-3 border-l-3 border-[#6f6f6f] bg-black pt-1 pl-[4px]">
            <div className="relative flex-1 overflow-hidden border-t-2 border-l-2 border-white">
              <PriceChart />
              <p className="relative pt-[2px] pl-[7px] font-['DejaVu_Sans_Condensed','DejaVu_Sans',sans-serif] text-[19px] whitespace-pre text-white">
                EURUSD,H4  1.09374 1.09374 1.09028 1.09193
              </p>
            </div>
          </div>
        </div>
      </div>
      <div className="mt-1 flex h-[40px] shrink-0 border-t-2 border-black pl-3">
        <Tab label="EURUSD,H4" width="w-[168px]" active />
        {charts.map((chart) => (
          <Tab key={chart.label} label={chart.label} width={chart.width} />
        ))}
        <div className="flex flex-1 items-center justify-end gap-[31px] pr-[20px]">
          <button aria-label="Previous chart">
            <svg viewBox="0 0 8 14" className="h-[14px] w-[8px]"><path d="M8 0v14L0 7z" fill="#8a8a8a" /></svg>
          </button>
          <button aria-label="Next chart">
            <svg viewBox="0 0 8 14" className="h-[14px] w-[8px]"><path d="M0 0v14l8-7z" fill="#8a8a8a" /></svg>
          </button>
        </div>
      </div>
    </section>
  );
}

function HistoryTable() {
  return (
    <table className="w-full table-fixed border-separate border-spacing-0 text-right">
      <thead>
        <tr className="h-[49px] text-[23px]">
          <th className="w-[252px] border-r-2 border-b-2 border-r-[#e2e2e2] border-b-[#c8c8c8] pl-3 text-left font-normal">
            Order <span className="pl-4 text-[16px] text-[#666]">/</span>
          </th>
          {columns.map((column, i) => (
            <th
              key={i}
              className={`border-r-2 border-b-2 border-r-[#e2e2e2] border-b-[#c8c8c8] pr-[9px] font-normal ${column.width}`}
            >
              {column.label}
            </th>
          ))}
          <th className="border-b-2 border-[#c8c8c8] pr-3 font-normal">Profit</th>
        </tr>
      </thead>
      <tbody>
        {orders.map((order) => (
          <tr key={order.id} className="even:bg-[#e9e9e9]">
            <td className="h-[40px] border-r-2 border-b-2 border-[#c8c8c8] p-0 text-[21px]">
              <div className="flex items-center gap-[13px] pl-2">
                <span className="flex h-[28px] w-[24px] items-center justify-center rounded-sm border-2 border-[#808080] bg-white">
                  <svg viewBox="0 0 16 16" className="size-[16px]">
                    <path d="m8 15 6-6h-3V1H5v8H2z" fill="#e2561f" stroke="#8f2d12" />
                  </svg>
                </span>
                {order.id}
              </div>
            </td>
            <td className="border-r-2 border-b-2 border-[#c8c8c8] p-0 pr-[5px] text-[21px]">{order.time}</td>
            <td className="border-r-2 border-b-2 border-[#c8c8c8] p-0 pr-[5px]">{order.type}</td>
            <td colSpan={8} className="border-r-2 border-b-2 border-[#c8c8c8] p-0 pr-[5px]">{order.comment}</td>
            <td className="border-b-2 border-[#c8c8c8] p-0 pr-2">{order.profit}</td>
          </tr>
        ))}
      </tbody>
      <tfoot>
        <tr className="bg-[#c6c6c6] text-[23px] font-bold">
          <td colSpan={11} className="h-[38px] p-0 text-left">
            <div className="flex items-center gap-[14px] pl-[15px] whitespace-pre">
              <svg viewBox="0 0 16 16" fill="none" className="size-[16px]">
                <circle cx="8" cy="8" r="6.5" fill="#d8d8d8" stroke="#8a8a8a" strokeWidth="2" />
                <path d="m4 12 8-8" stroke="#8a8a8a" strokeWidth="2" />
              </svg>
              Profit/Loss: 0.00  Credit: -16 008.17  Deposit: 0.00  Withdrawal: -90 752.31
            </div>
          </td>
          <td className="p-0 pr-2">-90 752.31</td>
        </tr>
      </tfoot>
    </table>
  );
}

function Terminal() {
  return (
    <section className="relative flex min-h-0 flex-1 border-t-2 border-white pt-[6px]">
      <div className="flex w-[30px] shrink-0 flex-col pb-[6px]">
        <button aria-label="Close Terminal" className="flex h-[28px] shrink-0 items-center justify-center">
          <CloseMark />
        </button>
        <h2 className="flex w-[28px] flex-1 rotate-180 items-center bg-gradient-to-t from-[#bccee8] to-[#9db2cf] pt-[3px] font-['DejaVu_Sans',sans-serif] text-[19px] [writing-mode:vertical-rl]">
          Terminal
        </h2>
      </div>
      <div className="mr-[8px] flex flex-1 flex-col border-l-2 border-[#a3a3a3]">
        <div className="flex-1 border-t-2 border-[#a3a3a3] bg-white">
          <HistoryTable />
        </div>
        <div className="mb-[10px] flex h-[40px] shrink-0 border-t-2 border-black pl-[2px]">
          <Tab label="Trade" width="w-[102px]" />
          <Tab label="Exposure" width="w-[136px]" divider={false} />
          <Tab label="Account History" width="w-[211px]" active />
          <Tab label="News" width="w-[100px]" />
          <Tab label="Alerts" width="w-[99px]" />
          <Tab label="Mailbox" badge="7" width="w-[140px]" />
          <Tab label="Market" width="w-[114px]" />
          <Tab label="Signals" width="w-[114px]" />
          <Tab label="Articles" badge="5" width="w-[132px]" />
          <Tab label="Code Base" width="w-[150px]" />
          <Tab label="Experts" width="w-[116px]" />
          <Tab label="Journal" width="w-[116px]" />
        </div>
      </div>
      <div className="pointer-events-none absolute right-[122px] bottom-[33px] text-[#b9b9b9]">
        <p className="text-[38px] leading-[50px]">Activate Windows</p>
        <p className="text-[29px] leading-[40px]">Go to Settings to activate Windows.</p>
      </div>
    </section>
  );
}

function StatusBar() {
  return (
    <footer className="flex h-[48px] border-t-2 border-[#a3a3a3] pt-2 pb-1">
      <p className="flex flex-1 items-center pl-1">For Help, press F1</p>
      <p className="flex w-[232px] items-center border-l-2 border-[#a3a3a3] pl-[10px]">Default</p>
      <div className="w-[203px] border-l-2 border-[#a3a3a3]" />
      <div className="w-[142px] border-l-2 border-[#a3a3a3]" />
      <div className="w-[143px] border-l-2 border-[#a3a3a3]" />
      <div className="w-[135px] border-l-2 border-[#a3a3a3]" />
      <div className="w-[141px] border-l-2 border-[#a3a3a3]" />
      <div className="w-[132px] border-l-2 border-[#a3a3a3]" />
      <div className="flex w-[259px] items-center gap-2 border-l-2 border-[#a3a3a3] pl-2">
        <svg viewBox="0 0 48 28" className="h-[28px] w-[48px]">
          {[0, 1, 2, 3, 4, 5, 6, 7].map((i) => (
            <g key={i}>
              <rect x={i * 6} width="4" height={19 - i * 2} fill="#66801f" />
              <rect x={i * 6} y={21 - i * 2} width="4" height={7 + i * 2} fill="#17375e" />
            </g>
          ))}
        </svg>
        51/3 kb
        <svg viewBox="0 0 30 30" className="-mb-3 ml-auto size-[30px]">
          <path d="M0 30 30 0M8 30 30 8M16 30l14-14M24 30l6-6" stroke="#8c8c8c" strokeWidth="2.5" />
        </svg>
      </div>
    </footer>
  );
}

function Taskbar() {
  return (
    <nav className="flex h-[80px] shrink-0 items-stretch bg-gradient-to-r from-[#1b4363] via-[#16345a] to-[#071445] text-white">
      <button aria-label="Start" className="flex w-[96px] items-center justify-center">
        <Icon>
          <path d="m0 4 14-2v13H0zM16 2l16-2v15H16zM0 17h14v13L0 28zM16 17h16v15l-16-2z" fill="#fff" />
        </Icon>
      </button>
      <button aria-label="Search" className="flex w-[96px] items-center justify-center">
        <Icon>
          <circle cx="20" cy="11" r="10" stroke="#fff" strokeWidth="2" />
          <path d="M13 19 1 31" stroke="#fff" strokeWidth="2" />
        </Icon>
      </button>
      <button aria-label="File Explorer" className="flex w-[108px] items-center justify-center">
        <svg viewBox="0 0 42 36" className="h-[36px] w-[42px]">
          <path d="M0 2q0-2 2-2h14l3 4h-19z" fill="#e0a12c" />
          <path d="M0 5h18l3-3h21v32H0z" fill="#f9d775" />
          <path d="M8 36V23q0-4 4-4h18q4 0 4 4v13h-7v-8H15v8z" fill="#4c93dc" />
        </svg>
      </button>
      <button aria-label="Chrome" className="ml-[5px] flex w-[80px] items-center justify-center border-b-5 border-[#80b5e8]">
        <svg viewBox="0 0 52 54" className="h-[54px] w-[52px]">
          <path d="M25 25 3.300 12.500A25 25 0 0 1 46.700 12.500z" fill="#dc4a3a" />
          <path d="M25 25 46.700 12.500A25 25 0 0 1 25 50z" fill="#fbc934" />
          <path d="M25 25V50A25 25 0 0 1 3.300 12.500z" fill="#3a9c50" />
          <circle cx="25" cy="25" r="12" fill="#fff" />
          <circle cx="25" cy="25" r="9.5" fill="#3b7fe8" />
          <circle cx="37" cy="38" r="15" fill="#7b8794" />
          <text x="37" y="45" fill="#fff" fontSize="19" textAnchor="middle">M</text>
        </svg>
      </button>
      <button aria-label="MEX Atlantic MT4" className="ml-[9px] flex w-[96px] items-center justify-center border-b-5 border-[#80b5e8] bg-[#45687c]">
        <Logo className="size-[50px]" />
      </button>
      <div className="ml-auto flex items-center">
        <span className="mr-[21px] flex h-[28px] w-[28px] items-center justify-center border border-[#999] bg-[#707070] text-[16px] font-bold">
          vm
        </span>
        <Icon className="mr-[12px] size-[34px]">
          <path d="M8 9h12v22H6V9zM8 9V1h10v8M11 5h1M14 5h1" stroke="#fff" strokeWidth="2" />
          <path d="m18 26 4 4 8-9" stroke="#fff" strokeWidth="2.4" />
        </Icon>
        <Icon className="mr-[14px] size-[34px]">
          <path d="M10 5h21v18H7V13M19 23v6M12 30h14" stroke="#fff" strokeWidth="2" />
          <path d="M1 5h8v6H7v2H3v-2H1z" stroke="#fff" strokeWidth="2" />
        </Icon>
        <Icon className="mr-[23px] size-[34px]">
          <path d="M1 11h5l7-7v24l-7-7H1z" stroke="#fff" strokeWidth="2" />
          <path d="M17 11q4 5 0 10M21 7q7 9 0 18M26 3q10 13 0 26" stroke="#fff" strokeWidth="2" />
        </Icon>
        <div className="w-[100px] text-center text-[23px] leading-[36px]">
          <p>4:43 PM</p>
          <p>1/5/2024</p>
        </div>
        <div className="mr-2 ml-[13px] h-[80px] w-[2px] bg-[#5a6a8c]" />
      </div>
    </nav>
  );
}

export default function App() {
  const menu = [
    { label: "File", width: "w-[72px]" },
    { label: "View", width: "w-[86px]" },
    { label: "Insert", width: "w-[95px]" },
    { label: "Charts", width: "w-[104px]" },
    { label: "Tools", width: "w-[89px]" },
    { label: "Window", width: "w-[124px]" },
    { label: "Help", width: "w-[80px]" },
  ];

  return (
    <div className="flex min-h-screen flex-col bg-[#efefef] font-['Open_Sans','Noto_Sans',sans-serif] text-[22px] leading-normal text-black">
      <Gradients />
      <header className="flex h-[47px] shrink-0 items-start justify-between bg-[#3275ce] text-white">
        <div className="flex h-[33px] items-center gap-[10px] pl-4">
          <Logo className="size-[32px]" />
          <h1 className="text-[23px]">66559518: MEXAtlantic-Real-4 - MEX Atlantic Corporation</h1>
        </div>
        <div className="flex items-center gap-[68px] pt-[3px] pr-[36px]">
          <button aria-label="Minimize">
            <svg viewBox="0 0 22 22" className="size-[22px]"><path d="M1 12h20" stroke="#fff" strokeWidth="2" /></svg>
          </button>
          <button aria-label="Maximize">
            <svg viewBox="0 0 22 22" fill="none" className="size-[22px]"><path d="M1 1h20v20H1z" stroke="#fff" strokeWidth="2" /></svg>
          </button>
          <button aria-label="Close">
            <svg viewBox="0 0 22 22" className="size-[22px]"><path d="m1 1 20 20M21 1 1 21" stroke="#fff" strokeWidth="2" /></svg>
          </button>
        </div>
      </header>
      <div className="flex h-[43px] shrink-0 border-t-2 border-b-2 border-t-white border-b-[#a3a3a3] pl-[14px] text-[23px]">
        {menu.map((item) => (
          <button key={item.label} className={`pb-1 text-left ${item.width}`}>
            {item.label}
          </button>
        ))}
      </div>
      <MainToolbar />
      <LineToolbar />
      <main className="flex flex-1 flex-col">
        <div className="flex h-[603px] shrink-0 border-t-2 border-b-2 border-t-white border-b-[#a3a3a3]">
          <MarketWatch />
          <Navigator />
          <ChartArea />
        </div>
        <Terminal />
      </main>
      <StatusBar />
      <Taskbar />
    </div>
  );
}
